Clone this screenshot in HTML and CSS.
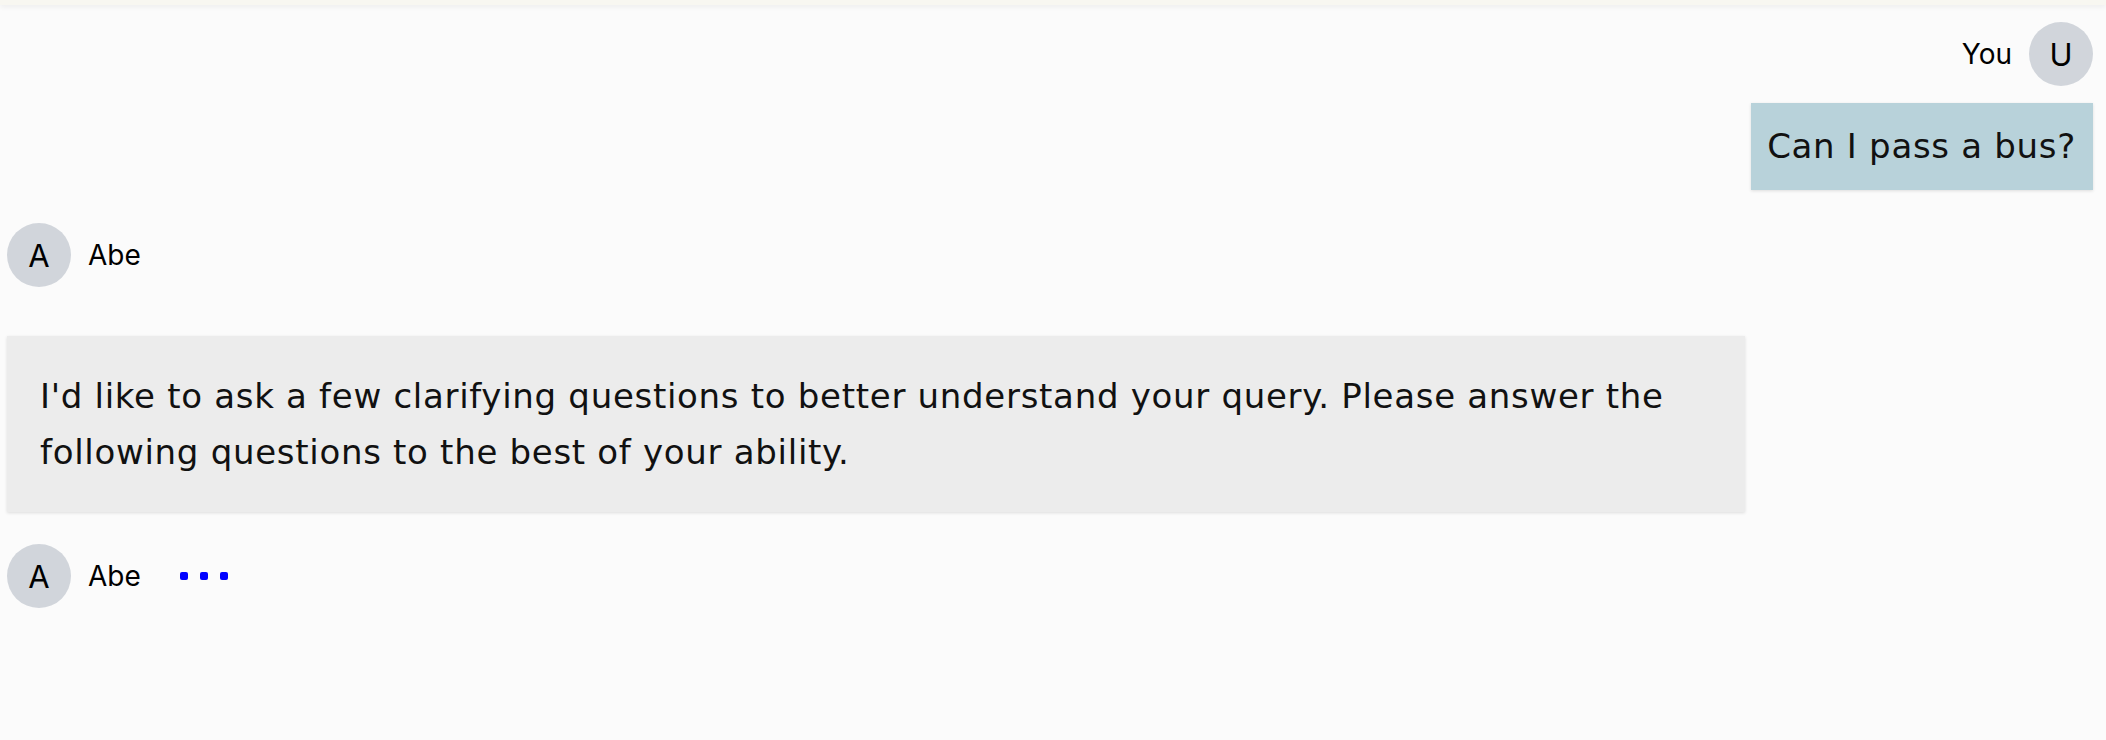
FILE: index.html
```html
<!DOCTYPE html>
<html lang="en">
<head>
<meta charset="utf-8">
<title>Chat</title>
<link rel="stylesheet" href="styles.css">
</head>
<body>
<div class="topbar"></div>
<main class="chat">
  <div class="msg-head msg-head--user">
    <span class="name">You</span>
    <span class="avatar">U</span>
  </div>
  <div class="bubble bubble--user">Can I pass a bus?</div>

  <div class="msg-head msg-head--bot">
    <span class="avatar">A</span>
    <span class="name">Abe</span>
  </div>
  <div class="bubble bubble--bot">I'd like to ask a few clarifying questions to better understand your query. Please answer the following questions to the best of your ability.</div>

  <div class="msg-head msg-head--bot msg-head--typing">
    <span class="avatar">A</span>
    <span class="name">Abe</span>
    <span class="dots"><i></i><i></i><i></i></span>
  </div>
</main>
</body>
</html>
```
FILE: styles.css
```css
html, body {
  margin: 0;
  padding: 0;
  background: #fbfbfb;
}

.topbar {
  height: 5px;
  background: #f8f7f1;
  box-shadow: 0 2px 5px rgba(0, 0, 0, 0.06);
}

.chat {
  display: flex;
  flex-direction: column;
  padding: 17px 13px 0 7px;
}

.msg-head {
  display: flex;
  align-items: center;
  gap: 17px;
  height: 64px;
}

.msg-head--user {
  justify-content: flex-end;
}

.msg-head--bot {
  margin-top: 33px;
}

.msg-head--typing {
  margin-top: 32px;
}

.avatar {
  width: 64px;
  height: 64px;
  border-radius: 50%;
  background: #d1d5db;
  color: #000;
  display: flex;
  align-items: center;
  justify-content: center;
  font-family: Inter, "Liberation Sans", sans-serif;
  font-size: 31px;
  flex: none;
}

.name {
  font-family: Inter, "Liberation Sans", sans-serif;
  font-size: 28px;
  color: #000;
}

.bubble {
  font-family: "DejaVu Sans", "Liberation Sans", sans-serif;
  font-size: 34px;
  letter-spacing: 0.7px;
  line-height: 56px;
  color: #111;
  box-shadow: 0 1px 3px rgba(0, 0, 0, 0.12);
}

.bubble--user {
  align-self: flex-end;
  margin-top: 17px;
  background: #b8d2da;
  padding: 15px 17px 16px 16px;
}

.bubble--bot {
  align-self: flex-start;
  margin-top: 49px;
  width: 1672px;
  background: #ececec;
  padding: 32px 33px;
}

.dots {
  display: flex;
  gap: 12px;
  margin-left: 22px;
}

.dots i {
  display: block;
  width: 8px;
  height: 8px;
  border-radius: 2px;
  background: #0000ff;
}
```
